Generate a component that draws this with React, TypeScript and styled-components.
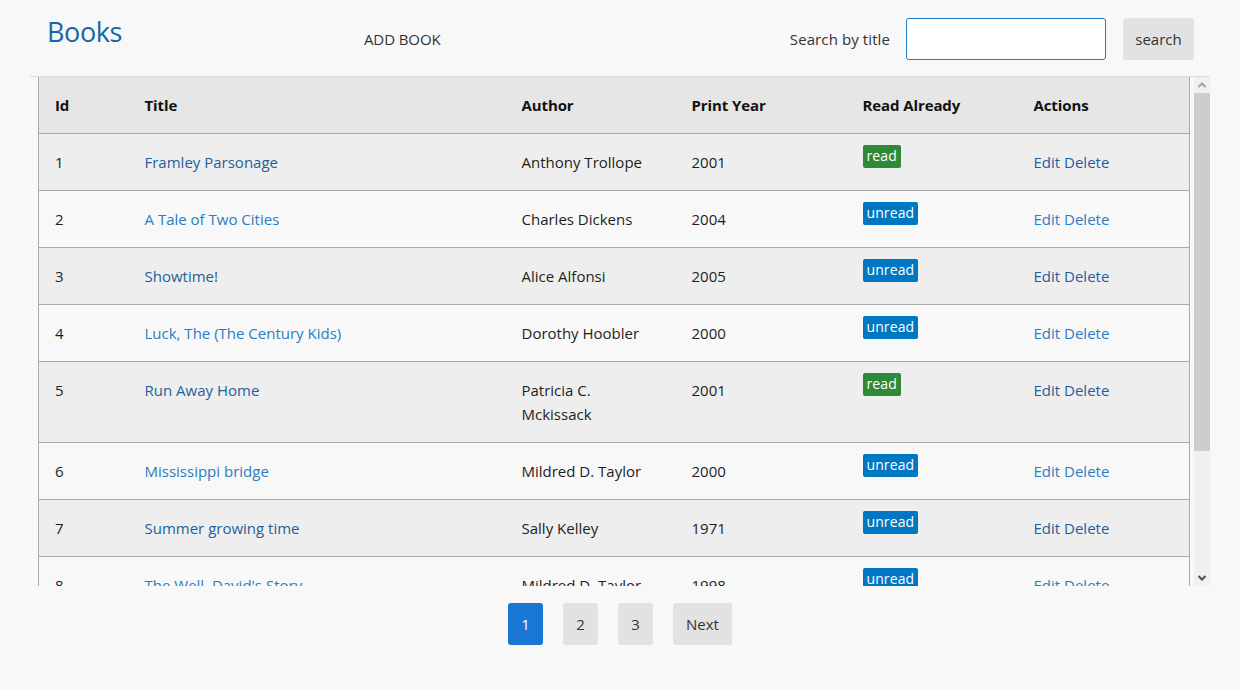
import React from "react";
import styled, { createGlobalStyle } from "styled-components";

const GlobalStyle = createGlobalStyle`
  html, body {
    margin: 0;
    padding: 0;
    background: #f8f8f8;
  }
  body {
    font-family: "Open Sans", "Noto Sans", sans-serif;
    color: #222;
  }
  * { box-sizing: border-box; }
`;

const Page = styled.div`
  width: 1240px;
  height: 690px;
  background: #f8f8f8;
  display: flex;
  flex-direction: column;
`;

const Header = styled.header`
  height: 76px;
  display: flex;
  align-items: center;
  padding: 0 46px 0 47px;
`;

const Brand = styled.h1`
  margin: 0;
  font-size: 27px;
  font-weight: 400;
  color: #1565a8;
  align-self: flex-start;
  margin-top: 14px;
  line-height: 36px;
  letter-spacing: -0.4px;
`;

const NavLink = styled.a`
  margin-left: 242px;
  font-size: 15px;
  color: #333;
  text-decoration: none;
  letter-spacing: -0.1px;
  margin-top: 1px;
`;

const SearchForm = styled.form`
  margin-left: auto;
  display: flex;
  align-items: center;
  margin-top: 2px;
`;

const SearchLabel = styled.label`
  font-size: 15px;
  color: #333;
  margin-right: 16px;
  letter-spacing: 0.1px;
`;

const SearchInput = styled.input`
  width: 200px;
  height: 42px;
  border: 1px solid #1a7fc7;
  border-radius: 3px;
  background: #fff;
  outline: none;
  padding: 0 8px;
  font-family: inherit;
  font-size: 15px;
`;

const SearchButton = styled.button`
  margin-left: 17px;
  width: 71px;
  height: 42px;
  border: none;
  border-radius: 3px;
  background: #e2e2e2;
  font-family: inherit;
  font-size: 15px;
  color: #333;
`;

const ScrollArea = styled.div`
  margin: 0 30px;
  height: 510px;
  border-top: 1px solid #dcdcdc;
  display: flex;
  background: #f8f8f8;
`;

const Viewport = styled.div`
  flex: 1;
  padding-left: 8px;
  overflow: hidden;
`;

const ScrollBar = styled.div`
  width: 16px;
  display: flex;
  flex-direction: column;
  background: #f0f0f0;
`;

const ArrowButton = styled.div`
  height: 16px;
  display: flex;
  align-items: center;
  justify-content: center;
`;

const Track = styled.div`
  flex: 1;
`;

const Thumb = styled.div`
  height: 358px;
  background: #cdcdcd;
`;

const Table = styled.table`
  width: 1151px;
  table-layout: fixed;
  border-collapse: collapse;
  border-left: 1px solid #aaa;
  border-right: 1px solid #aaa;
  font-size: 15px;
`;

const HeadCell = styled.th`
  text-align: left;
  font-weight: 700;
  color: #111;
  background: #e6e6e6;
  padding: 16px 16px;
  line-height: 24px;
  border-bottom: 1px solid #aaa;
  letter-spacing: -0.1px;
`;

const Row = styled.tr<{ $odd: boolean }>`
  background: ${(p) => (p.$odd ? "#eeeeee" : "#f8f8f8")};
`;

const Cell = styled.td`
  vertical-align: top;
  padding: 16px 16px;
  line-height: 24px;
  border-bottom: 1px solid #aaa;
  color: #1e1e1e;
`;

const Link = styled.a<{ $odd: boolean }>`
  color: ${(p) => (p.$odd ? "#1f5f9c" : "#2a7dc2")};
  text-decoration: none;
`;

const Badge = styled.span<{ $read: boolean }>`
  display: block;
  width: fit-content;
  margin-top: -5px;
  margin-bottom: 6px;
  height: 23px;
  line-height: 22px;
  padding: 0 4px;
  border-radius: 2px;
  font-size: 14px;
  letter-spacing: 0.1px;
  color: #fff;
  background: ${(p) => (p.$read ? "#2e8a38" : "#0077c2")};
`;

const Pager = styled.nav`
  display: flex;
  justify-content: center;
  gap: 20px;
  margin-top: 17px;
`;

const PageButton = styled.button<{ $active?: boolean }>`
  height: 42px;
  min-width: 35px;
  padding: 0 13px;
  border: none;
  border-radius: 3px;
  font-family: inherit;
  font-size: 15px;
  color: ${(p) => (p.$active ? "#fff" : "#333")};
  background: ${(p) => (p.$active ? "#1976d2" : "#e2e2e2")};
`;

type Book = { id: number; title: string; author: string; year: number; read: boolean };

const books: Book[] = [
  { id: 1, title: "Framley Parsonage", author: "Anthony Trollope", year: 2001, read: true },
  { id: 2, title: "A Tale of Two Cities", author: "Charles Dickens", year: 2004, read: false },
  { id: 3, title: "Showtime!", author: "Alice Alfonsi", year: 2005, read: false },
  { id: 4, title: "Luck, The (The Century Kids)", author: "Dorothy Hoobler", year: 2000, read: false },
  { id: 5, title: "Run Away Home", author: "Patricia C. Mckissack", year: 2001, read: true },
  { id: 6, title: "Mississippi bridge", author: "Mildred D. Taylor", year: 2000, read: false },
  { id: 7, title: "Summer growing time", author: "Sally Kelley", year: 1971, read: false },
  { id: 8, title: "The Well, David's Story", author: "Mildred D. Taylor", year: 1998, read: false },
  { id: 9, title: "The Friendship", author: "Mildred D. Taylor", year: 1987, read: true },
  { id: 10, title: "Goin' Someplace Special", author: "Patricia C. Mckissack", year: 2001, read: false },
];

const widths = [90, 377, 170, 171, 171, 172];

const Chevron = ({ up, color }: { up: boolean; color: string }) => (
  <svg width="10" height="8" viewBox="0 0 10 8">
    <path
      d={up ? "M1.5 6 L5 2.5 L8.5 6" : "M1.5 2 L5 5.5 L8.5 2"}
      fill="none"
      stroke={color}
      strokeWidth="2"
    />
  </svg>
);

export default function App() {
  return (
    <Page>
      <GlobalStyle />
      <Header>
        <Brand>Books</Brand>
        <NavLink href="#">ADD BOOK</NavLink>
        <SearchForm onSubmit={(e) => e.preventDefault()}>
          <SearchLabel htmlFor="search">Search by title</SearchLabel>
          <SearchInput id="search" type="text" />
          <SearchButton type="submit">search</SearchButton>
        </SearchForm>
      </Header>
      <ScrollArea>
        <Viewport>
          <Table>
            <colgroup>
              {widths.map((w, i) => (
                <col key={i} style={{ width: w }} />
              ))}
            </colgroup>
            <thead>
              <tr>
                <HeadCell>Id</HeadCell>
                <HeadCell>Title</HeadCell>
                <HeadCell>Author</HeadCell>
                <HeadCell>Print Year</HeadCell>
                <HeadCell>Read Already</HeadCell>
                <HeadCell>Actions</HeadCell>
              </tr>
            </thead>
            <tbody>
              {books.map((b, i) => {
                const odd = i % 2 === 0;
                return (
                  <Row key={b.id} $odd={odd}>
                    <Cell>{b.id}</Cell>
                    <Cell>
                      <Link href="#" $odd={odd}>{b.title}</Link>
                    </Cell>
                    <Cell>{b.author}</Cell>
                    <Cell>{b.year}</Cell>
                    <Cell>
                      <Badge $read={b.read}>{b.read ? "read" : "unread"}</Badge>
                    </Cell>
                    <Cell>
                      <Link href="#" $odd={odd}>Edit</Link>{" "}
                      <Link href="#" $odd={odd}>Delete</Link>
                    </Cell>
                  </Row>
                );
              })}
            </tbody>
          </Table>
        </Viewport>
        <ScrollBar>
          <ArrowButton>
            <Chevron up color="#a3a3a3" />
          </ArrowButton>
          <Track>
            <Thumb />
          </Track>
          <ArrowButton>
            <Chevron up={false} color="#505050" />
          </ArrowButton>
        </ScrollBar>
      </ScrollArea>
      <Pager>
        <PageButton $active>1</PageButton>
        <PageButton>2</PageButton>
        <PageButton>3</PageButton>
        <PageButton>Next</PageButton>
      </Pager>
    </Page>
  );
}
